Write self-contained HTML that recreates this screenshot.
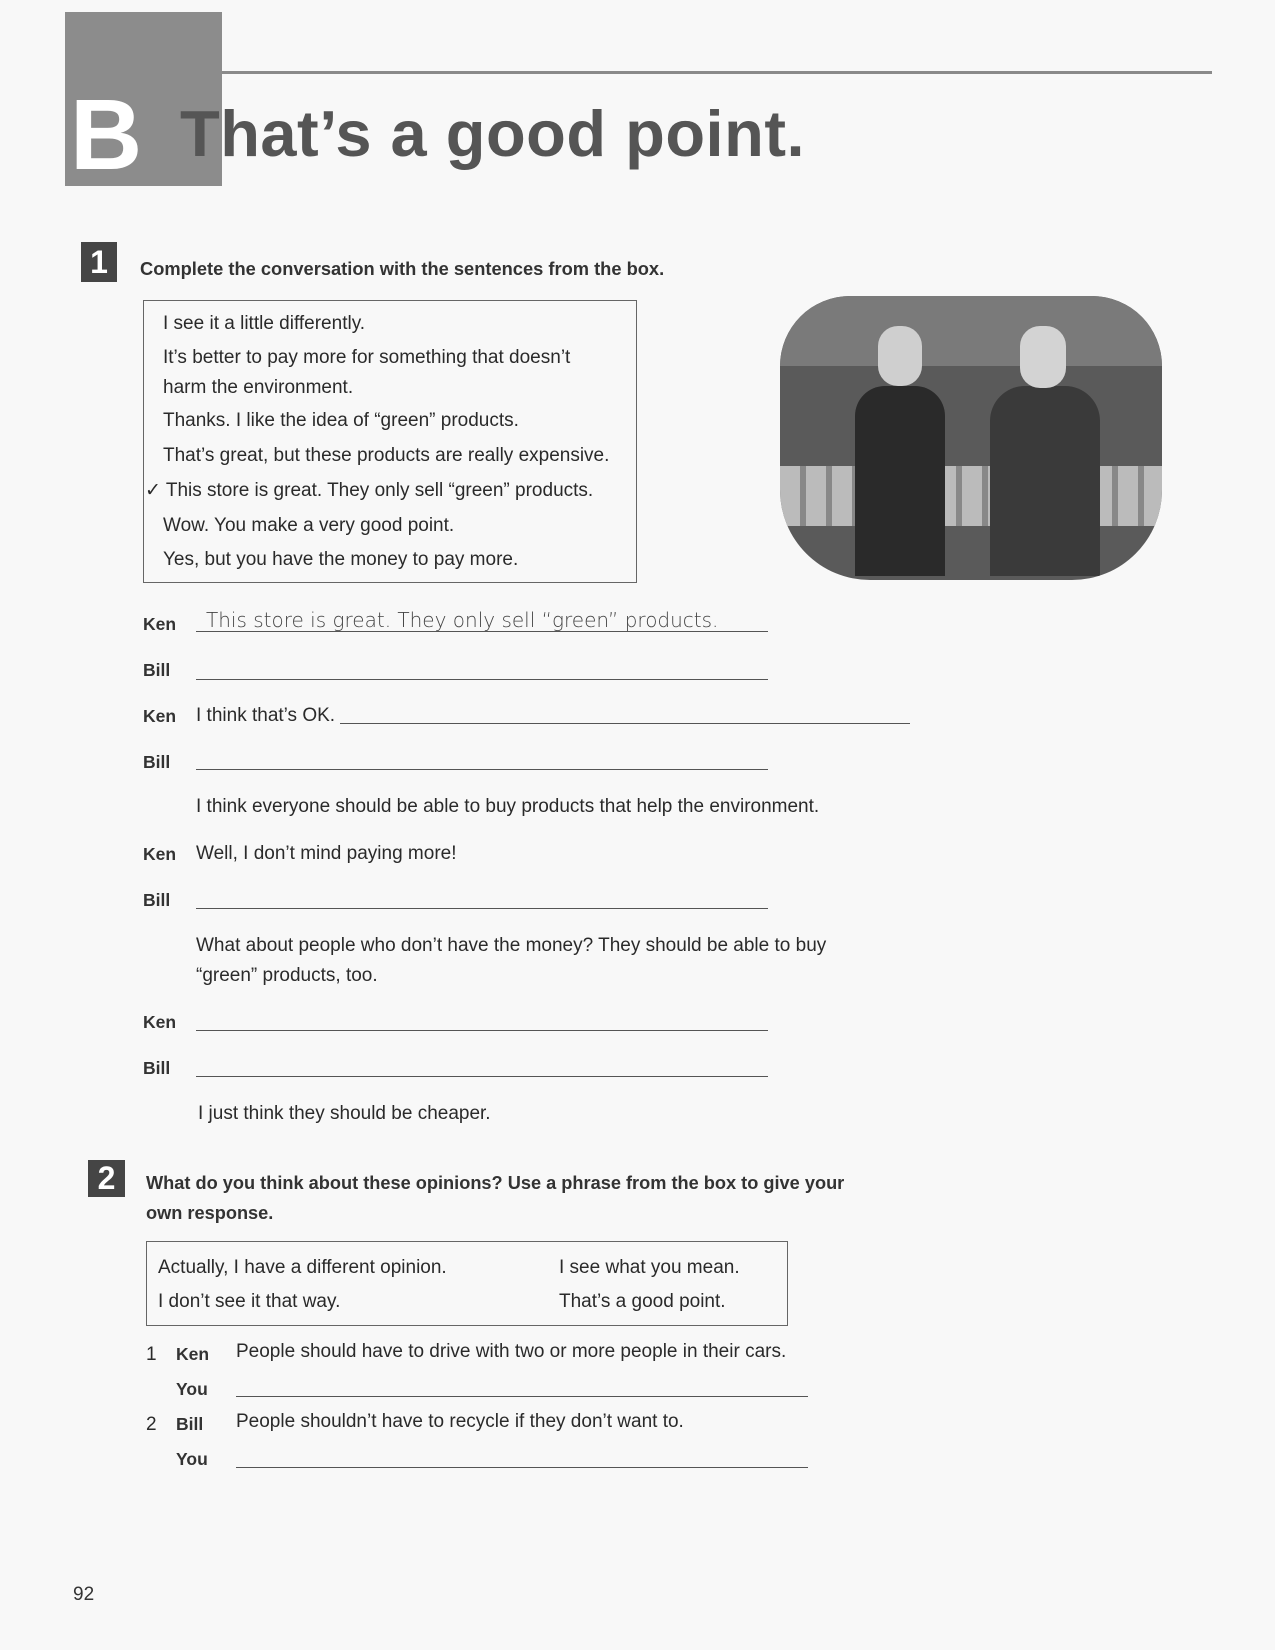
<!DOCTYPE html>
<html><head><meta charset="utf-8"><style>
body{margin:0;background:#f8f8f8;}
#p{position:relative;width:1275px;height:1650px;overflow:hidden;font-family:"Liberation Sans",sans-serif;color:#2a2a2a;}
.a{position:absolute;white-space:nowrap;}
.t{font-size:19px;}
.ln{position:absolute;height:0;border-top:1.3px solid #555;}
.nm{font-weight:bold;font-size:17.5px;color:#333;}
</style></head><body><div id="p">
<div class="a" style="left:65px;top:12px;width:157px;height:174px;background:#8c8c8c"></div>
<div class="a" style="left:70px;top:80px;font-size:100px;font-weight:bold;color:#fff;line-height:110px">B</div>
<div class="a" style="left:222px;top:71px;width:990px;height:3px;background:#8a8a8a"></div>
<div class="a" style="left:180px;top:98px;font-size:65px;font-weight:bold;color:#555;line-height:72px;letter-spacing:0.5px">That’s a good point.</div>

<div class="a" style="left:81px;top:242px;width:36px;height:40px;background:#454545;color:#fff;font-size:32px;font-weight:bold;text-align:center;line-height:40px">1</div>
<div class="a" style="left:140px;top:258px;font-size:18.3px;font-weight:bold;color:#333">Complete the conversation with the sentences from the box.</div>

<div class="a" style="left:143px;top:300px;width:492px;height:281px;border:1.5px solid #666"></div>
<div class="a t" style="left:163px;top:313px">I see it a little differently.</div>
<div class="a t" style="left:163px;top:347px">It’s better to pay more for something that doesn’t</div>
<div class="a t" style="left:163px;top:377px">harm the environment.</div>
<div class="a t" style="left:163px;top:410px">Thanks. I like the idea of “green” products.</div>
<div class="a t" style="left:163px;top:445px">That’s great, but these products are really expensive.</div>
<div class="a t" style="left:145px;top:479px">✓ This store is great. They only sell “green” products.</div>
<div class="a t" style="left:163px;top:515px">Wow. You make a very good point.</div>
<div class="a t" style="left:163px;top:549px">Yes, but you have the money to pay more.</div>

<div class="a" style="left:780px;top:296px;width:382px;height:284px;border-radius:70px 70px 90px 90px;background:#5a5a5a;overflow:hidden">
<div class="a" style="left:0;top:0;width:382px;height:70px;background:#7a7a7a"></div>
<div class="a" style="left:0;top:170px;width:382px;height:60px;background:repeating-linear-gradient(90deg,#bbb 0 20px,#888 20px 26px)"></div>
<div class="a" style="left:75px;top:90px;width:90px;height:190px;background:#2a2a2a;border-radius:30px 30px 0 0"></div>
<div class="a" style="left:98px;top:30px;width:44px;height:60px;background:#cfcfcf;border-radius:20px"></div>
<div class="a" style="left:210px;top:90px;width:110px;height:190px;background:#3a3a3a;border-radius:35px 35px 0 0"></div>
<div class="a" style="left:240px;top:30px;width:46px;height:62px;background:#d3d3d3;border-radius:20px"></div>
</div>

<div class="a nm" style="left:143px;top:614px">Ken</div>
<div class="a" style="left:206px;top:608px;font-size:20px;font-family:'DejaVu Sans',sans-serif;color:#444;font-weight:300">This store is great. They only sell “green” products.</div>
<div class="ln" style="left:196px;top:631px;width:572px"></div>
<div class="a nm" style="left:143px;top:660px">Bill</div>
<div class="ln" style="left:196px;top:679px;width:572px"></div>
<div class="a nm" style="left:143px;top:706px">Ken</div>
<div class="a t" style="left:196px;top:705px">I think that’s OK.</div>
<div class="ln" style="left:340px;top:723px;width:570px"></div>
<div class="a nm" style="left:143px;top:752px">Bill</div>
<div class="ln" style="left:196px;top:769px;width:572px"></div>
<div class="a t" style="left:196px;top:796px">I think everyone should be able to buy products that help the environment.</div>
<div class="a nm" style="left:143px;top:844px">Ken</div>
<div class="a t" style="left:196px;top:843px">Well, I don’t mind paying more!</div>
<div class="a nm" style="left:143px;top:890px">Bill</div>
<div class="ln" style="left:196px;top:908px;width:572px"></div>
<div class="a t" style="left:196px;top:935px">What about people who don’t have the money? They should be able to buy</div>
<div class="a t" style="left:196px;top:965px">“green” products, too.</div>
<div class="a nm" style="left:143px;top:1012px">Ken</div>
<div class="ln" style="left:196px;top:1030px;width:572px"></div>
<div class="a nm" style="left:143px;top:1058px">Bill</div>
<div class="ln" style="left:196px;top:1076px;width:572px"></div>
<div class="a t" style="left:198px;top:1103px">I just think they should be cheaper.</div>

<div class="a" style="left:88px;top:1160px;width:37px;height:37px;background:#454545;color:#fff;font-size:32px;font-weight:bold;text-align:center;line-height:37px">2</div>
<div class="a" style="left:146px;top:1173px;font-size:18.2px;font-weight:bold;color:#333">What do you think about these opinions? Use a phrase from the box to give your</div>
<div class="a" style="left:146px;top:1203px;font-size:18.2px;font-weight:bold;color:#333">own response.</div>
<div class="a" style="left:146px;top:1241px;width:640px;height:83px;border:1.5px solid #666"></div>
<div class="a t" style="left:158px;top:1257px">Actually, I have a different opinion.</div>
<div class="a t" style="left:559px;top:1257px">I see what you mean.</div>
<div class="a t" style="left:158px;top:1291px">I don’t see it that way.</div>
<div class="a t" style="left:559px;top:1291px">That’s a good point.</div>

<div class="a t" style="left:146px;top:1344px">1</div>
<div class="a nm" style="left:176px;top:1344px">Ken</div>
<div class="a t" style="left:236px;top:1341px">People should have to drive with two or more people in their cars.</div>
<div class="a nm" style="left:176px;top:1379px">You</div>
<div class="ln" style="left:236px;top:1396px;width:572px"></div>
<div class="a t" style="left:146px;top:1414px">2</div>
<div class="a nm" style="left:176px;top:1414px">Bill</div>
<div class="a t" style="left:236px;top:1411px">People shouldn’t have to recycle if they don’t want to.</div>
<div class="a nm" style="left:176px;top:1449px">You</div>
<div class="ln" style="left:236px;top:1467px;width:572px"></div>

<div class="a" style="left:73px;top:1584px;font-size:19px;color:#333">92</div>
</div></body></html>
